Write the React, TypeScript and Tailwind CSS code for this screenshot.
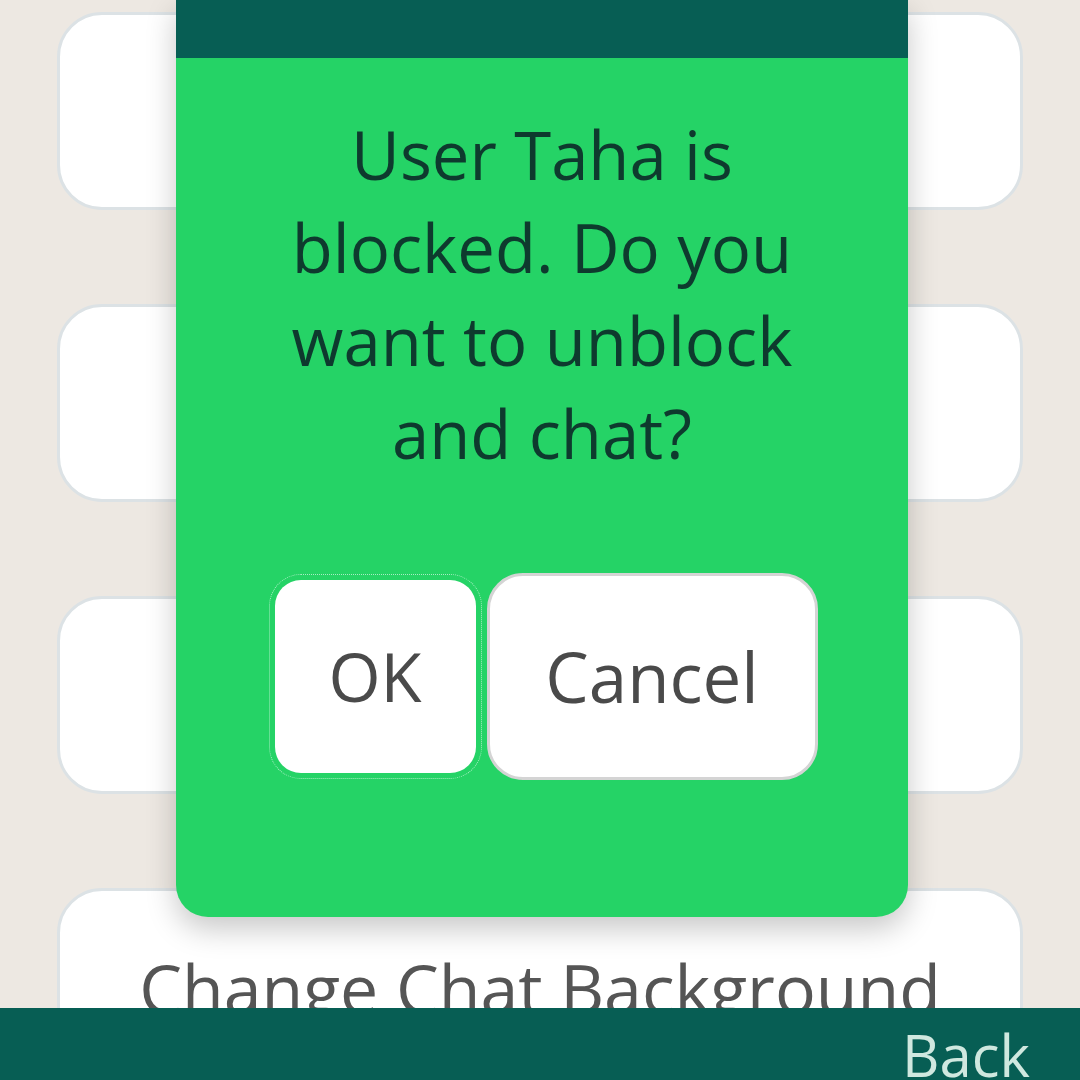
export default function App() {
  const cards = ['', '', '', 'Change Chat Background']

  return (
    <div
      className="relative w-[1080px] h-[1080px] overflow-hidden bg-[#ede8e2] flex flex-col"
      style={{ fontFamily: '"Open Sans", "Noto Sans", sans-serif' }}
    >
      {/* Settings list behind the dialog */}
      <div className="flex-1 overflow-hidden flex flex-col gap-[94px] pt-[12px] px-[57px]">
        {cards.map((label, i) => (
          <div
            key={i}
            className="shrink-0 h-[198px] rounded-[45px] bg-white border-[3px] border-[#dce2e5] flex items-center justify-center text-[68px] leading-[93px] text-[#555555] whitespace-nowrap"
          >
            {label}
          </div>
        ))}
      </div>

      {/* Footer */}
      <div className="h-[72px] shrink-0 bg-[#075e54] flex justify-end pr-[50px]">
        <span className="text-[58px] leading-[93px] text-[#cfe8df]">Back</span>
      </div>

      {/* Dialog */}
      <div className="absolute left-[176px] top-0 w-[732px] h-[917px] rounded-b-[32px] bg-[#25d366] overflow-hidden shadow-[0_12px_30px_rgba(0,0,0,0.22)] flex flex-col">
        <div className="h-[58px] shrink-0 bg-[#075e54]" />
        <p className="mt-[50px] text-center text-[67px] leading-[93px] text-[#0e3a2e]">
          User Taha is
          <br />
          blocked. Do you
          <br />
          want to unblock
          <br />
          and chat?
        </p>
        <div className="mt-[93px] pl-[8px] flex items-center justify-center gap-[11px]">
          <button className="w-[201px] h-[193px] rounded-[26px] bg-white text-[67px] text-[#4a4a4a] outline outline-1 outline-dotted outline-white/60 outline-offset-[5px]">
            OK
          </button>
          <button className="w-[331px] h-[207px] rounded-[36px] bg-white border-[3px] border-[#d4d4d4] text-[69px] text-[#4a4a4a]">
            Cancel
          </button>
        </div>
      </div>
    </div>
  )
}
